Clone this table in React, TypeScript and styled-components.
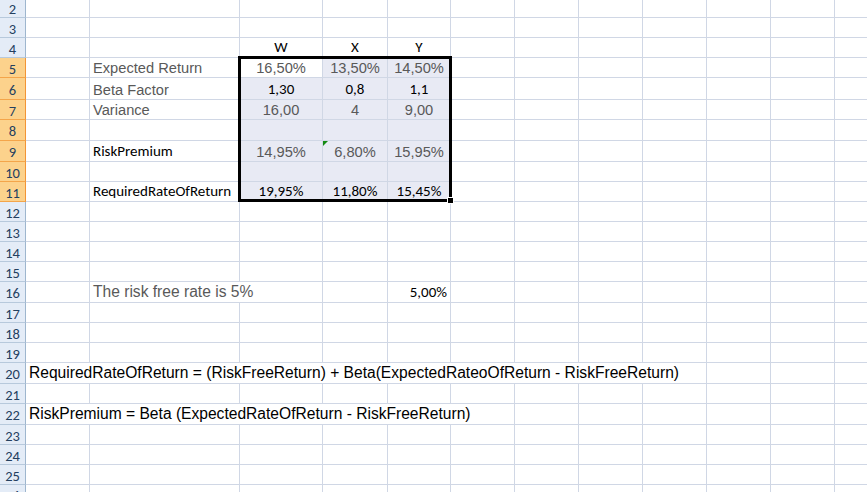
import React from 'react';
import styled, { createGlobalStyle, css } from 'styled-components';

const GlobalStyle = createGlobalStyle`
  html, body {
    margin: 0;
    padding: 0;
    background: #fff;
    overflow: hidden;
  }
  body {
    width: 867px;
    height: 492px;
  }
`;

// column widths incl. the right gridline: A, B, C .. L
const COLS = [64, 150, 83, 65, 63, 64, 64, 64, 64, 64, 64, 64];
// visible rows (row 2 is cut at the top)
const ROWS: [number, number][] = [
  [2, 20], [3, 20], [4, 20], [5, 20], [6, 22], [7, 20], [8, 21], [9, 21],
  [10, 20], [11, 20], [12, 20], [13, 20], [14, 20], [15, 20], [16, 21],
  [17, 20], [18, 20], [19, 20], [20, 21], [21, 20], [22, 21], [23, 20],
  [24, 20], [25, 20], [26, 20],
];

const SEL = { top: 5, bottom: 11, left: 3, right: 5 }; // C5:E11

type Font = 'calibri' | 'arial' | 'arialLarge';
type Align = 'left' | 'center' | 'right';

interface Entry {
  col: number; // 1 = A
  text: string;
  font: Font;
  gray?: boolean;
  align?: Align;
  span?: number;
  flag?: boolean;
}

const C = (col: number, text: string, extra: Partial<Entry> = {}): Entry => ({
  col, text, font: 'calibri', ...extra,
});
const A = (col: number, text: string, extra: Partial<Entry> = {}): Entry => ({
  col, text, font: 'arial', gray: true, ...extra,
});

const DATA: Record<number, Entry[]> = {
  4: [C(3, 'W', { align: 'center' }), C(4, 'X', { align: 'center' }), C(5, 'Y', { align: 'center' })],
  5: [A(2, 'Expected Return'), A(3, '16,50%', { align: 'center' }), A(4, '13,50%', { align: 'center' }), A(5, '14,50%', { align: 'center' })],
  6: [A(2, 'Beta Factor'), C(3, '1,30', { align: 'center' }), C(4, '0,8', { align: 'center' }), C(5, '1,1', { align: 'center' })],
  7: [A(2, 'Variance'), A(3, '16,00', { align: 'center' }), A(4, '4', { align: 'center' }), A(5, '9,00', { align: 'center' })],
  9: [C(2, 'RiskPremium'), A(3, '14,95%', { align: 'center' }), A(4, '6,80%', { align: 'center', flag: true }), A(5, '15,95%', { align: 'center' })],
  11: [C(2, 'RequiredRateOfReturn'), C(3, '19,95%', { align: 'center' }), C(4, '11,80%', { align: 'center' }), C(5, '15,45%', { align: 'center' })],
  16: [A(2, 'The risk free rate is 5%', { span: 2, font: 'arialLarge' }), C(5, '5,00%', { align: 'right' })],
  20: [A(1, 'RequiredRateOfReturn = (RiskFreeReturn) + Beta(ExpectedRateoOfReturn - RiskFreeReturn)', { span: 9, gray: false, font: 'arialLarge' })],
  22: [A(1, 'RiskPremium = Beta (ExpectedRateOfReturn - RiskFreeReturn)', { span: 6, gray: false, font: 'arialLarge' })],
};

const Sheet = styled.div`
  display: grid;
  grid-template-columns: 26px ${COLS.map((w) => `${w}px`).join(' ')};
  grid-template-rows: ${ROWS.map(([, h]) => `${h}px`).join(' ')};
  margin-top: -2px;
  width: max-content;
`;

const RowHead = styled.div<{ $row: number; $active: boolean }>`
  grid-row: ${(p) => p.$row};
  grid-column: 1;
  box-sizing: border-box;
  display: flex;
  align-items: center;
  justify-content: center;
  padding-top: 2px;
  font-family: Calibri, Carlito, Lato, sans-serif;
  font-size: 14.5px;
  color: #24405f;
  background: ${(p) => (p.$active ? '#fcd28c' : '#e4ecf7')};
  border-right: 1px solid ${(p) => (p.$active ? '#f29536' : '#9eb6ce')};
  border-bottom: 1px solid ${(p) => (p.$active ? '#f4a54a' : '#b7c9dc')};
`;

const fonts = {
  calibri: css`
    font-family: Calibri, Carlito, Lato, sans-serif;
    font-size: 15px;
  `,
  arial: css`
    font-family: 'Liberation Sans', Arial, sans-serif;
    font-size: 14.67px;
  `,
  arialLarge: css`
    font-family: 'Liberation Sans', Arial, sans-serif;
    font-size: 15.6px;
  `,
};

const justify = { left: 'flex-start', center: 'center', right: 'flex-end' };

const Cell = styled.div<{
  $row: number;
  $col: number;
  $span: number;
  $selected: boolean;
  $font: Font;
  $gray: boolean;
  $align: Align;
  $flag: boolean;
}>`
  grid-row: ${(p) => p.$row};
  grid-column: ${(p) => `${p.$col} / span ${p.$span}`};
  position: relative;
  box-sizing: border-box;
  display: flex;
  align-items: flex-end;
  justify-content: ${(p) => justify[p.$align]};
  padding: 0 3px 1px;
  white-space: nowrap;
  overflow: hidden;
  border-right: 1px solid #d0d7e5;
  border-bottom: 1px solid #d0d7e5;
  background: ${(p) => (p.$selected ? '#e8eaf4' : '#fff')};
  color: ${(p) => (p.$gray ? '#595959' : '#000')};
  ${(p) => fonts[p.$font]}

  ${(p) =>
    p.$flag &&
    css`
      &::before {
        content: '';
        position: absolute;
        top: 0;
        left: 0;
        border-top: 5px solid #138a13;
        border-right: 5px solid transparent;
      }
    `}
`;

const Selection = styled.div<{ $rows: string; $cols: string }>`
  grid-row: ${(p) => p.$rows};
  grid-column: ${(p) => p.$cols};
  position: relative;
  margin: -2px -1px 0 -2px;
  border: 3px solid #000;
  pointer-events: none;
`;

const FillHandle = styled.div`
  position: absolute;
  right: -5px;
  bottom: -5px;
  width: 5px;
  height: 5px;
  background: #000;
  border: 1px solid #fff;
`;

export default function App() {
  const cells: React.ReactNode[] = [];

  ROWS.forEach(([n], i) => {
    const gridRow = i + 1;
    const active = n >= SEL.top && n <= SEL.bottom;
    cells.push(
      <RowHead key={`h${n}`} $row={gridRow} $active={active}>
        {n}
      </RowHead>,
    );

    const entries = DATA[n] || [];
    let col = 1;
    while (col <= COLS.length) {
      const e = entries.find((x) => x.col === col);
      const span = e?.span ?? 1;
      const selected =
        active && col >= SEL.left && col <= SEL.right && !(n === SEL.top && col === SEL.left);
      cells.push(
        <Cell
          key={`${n}-${col}`}
          $row={gridRow}
          $col={col + 1}
          $span={span}
          $selected={selected}
          $font={e?.font ?? 'calibri'}
          $gray={!!e?.gray}
          $align={e?.align ?? 'left'}
          $flag={!!e?.flag}
        >
          {e?.text}
        </Cell>,
      );
      col += span;
    }
  });

  const firstRow = ROWS.findIndex(([n]) => n === SEL.top) + 1;
  const lastRow = ROWS.findIndex(([n]) => n === SEL.bottom) + 1;

  return (
    <>
      <GlobalStyle />
      <Sheet>
        {cells}
        <Selection $rows={`${firstRow} / ${lastRow + 1}`} $cols={`${SEL.left + 1} / ${SEL.right + 2}`}>
          <FillHandle />
        </Selection>
      </Sheet>
    </>
  );
}
